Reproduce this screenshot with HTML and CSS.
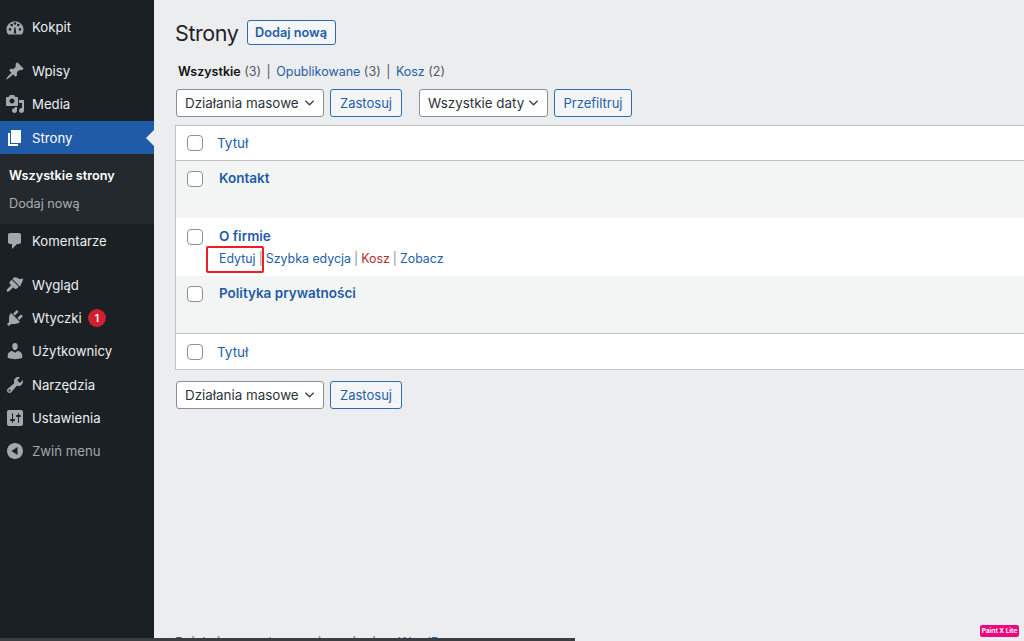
FILE: index.html
```html
<!DOCTYPE html>
<html lang="pl">
<head>
  <meta charset="UTF-8">
  <title>Strony</title>
  <link rel="stylesheet" href="styles.css">
</head>
<body>
  <div class="layout">
    <aside class="sidebar">
      <ul class="menu">
        <li class="menu-item">
          <svg class="icon" viewBox="0 0 20 20"><path fill-rule="evenodd" d="M3.300 17.500h13.400c1.200-1.400 1.800-3.100 1.800-5 0-4.600-3.800-8.300-8.500-8.300S1.500 7.900 1.500 12.500c0 1.900.6 3.600 1.800 5zM5 13.700a1.300 1.300 0 1 1 0-2.600 1.300 1.300 0 0 1 0 2.600zm1.700-4.300a1.300 1.300 0 1 1 0-2.600 1.300 1.300 0 0 1 0 2.600zM10 7.800a1.300 1.300 0 1 1 0-2.600 1.300 1.300 0 0 1 0 2.600zm1.200 8.700H8.800l.5-5 .7-2 .7 2zm2.100-7.100a1.300 1.300 0 1 1 0-2.600 1.300 1.300 0 0 1 0 2.600zm1.700 4.300a1.300 1.300 0 1 1 0-2.600 1.300 1.300 0 0 1 0 2.600z"/></svg>
          <span>Kokpit</span>
        </li>
        <li class="menu-gap"></li>
        <li class="menu-item">
          <svg class="icon" viewBox="0 0 20 20"><path d="M10.440 3.020l1.820-1.820 6.360 6.350-1.830 1.820c-1.050-.68-2.480-.57-3.410.36l-.75.75c-.92.930-1.040 2.350-.35 3.410l-1.830 1.820-2.410-2.410-2.800 2.790c-.42.420-3.380 2.710-3.800 2.290s1.860-3.390 2.280-3.810l2.790-2.790L4.100 9.360l1.830-1.820c1.050.69 2.480.57 3.400-.36l.75-.75c.93-.92 1.050-2.350.36-3.410z"/></svg>
          <span>Wpisy</span>
        </li>
        <li class="menu-item">
          <svg class="icon" viewBox="0 0 20 20"><path fill-rule="evenodd" d="M13 11V4c0-.55-.45-1-1-1h-1.670L9 1H5L3.670 3H2c-.55 0-1 .45-1 1v7c0 .55.45 1 1 1h10c.55 0 1-.45 1-1zM7 4.500c1.380 0 2.500 1.120 2.500 2.500S8.380 9.500 7 9.500 4.500 8.380 4.500 7 5.620 4.500 7 4.500zM14 6h5v10.500c0 1.380-1.120 2.500-2.500 2.500S14 17.880 14 16.500s1.120-2.500 2.500-2.500c.17 0 .34.020.5.050V9h-3V6zm-4 8.050V13h2v3.500c0 1.380-1.120 2.500-2.500 2.500S7 17.880 7 16.500 8.120 14 9.500 14c.17 0 .34.020.5.050z"/></svg>
          <span>Media</span>
        </li>
        <li class="menu-item menu-item-current">
          <svg class="icon" viewBox="0 0 20 20"><path d="M6 15V2h10v13H6zm-1 1h8v2H3V5h2v11z"/></svg>
          <span>Strony</span>
        </li>
        <li class="submenu">
          <div class="submenu-link submenu-link-current">Wszystkie strony</div>
          <div class="submenu-link">Dodaj nową</div>
        </li>
        <li class="menu-item">
          <svg class="icon" viewBox="0 0 20 20"><path d="M5 2h9c1.100 0 2 .9 2 2v7c0 1.100-.9 2-2 2h-2l-5 5v-5H5c-1.100 0-2-.9-2-2V4c0-1.100.9-2 2-2z"/></svg>
          <span>Komentarze</span>
        </li>
        <li class="menu-gap"></li>
        <li class="menu-item">
          <svg class="icon" viewBox="0 0 20 20"><path d="M14.480 11.060L7.410 3.990l1.500-1.500c.5-.56 2.300-.47 3.510.32 1.210.8 1.430 1.280 2.660 1.280 1.180 0 2.270-.28 2.920-.75 0 0-.08 3.180-1.120 4.360-1.060 1.180-1.370 1.820-.9 3.360zM6.760 4.640l7.070 7.070-1.590 1.590c-.83.83-2.120.92-2.830.21l-1.220-1.220-3.760 3.770c-.32.31-1.600 1.150-2.400.35-.8-.8.040-2.080.35-2.400l3.770-3.760-1.220-1.220c-.71-.71-.62-2 .21-2.830z"/></svg>
          <span>Wygląd</span>
        </li>
        <li class="menu-item">
          <svg class="icon" viewBox="0 0 20 20"><path d="M13.110 4.360L9.870 7.600 8 5.730l3.240-3.240c.35-.34 1.050-.2 1.560.31.52.51.66 1.210.31 1.560zm-8 1.770l.91-1.120 9.010 9.010-1.190.84c-.71.71-2.630 1.160-3.820 1.160H6.140L4.900 17.260c-.59.59-1.540.59-2.120 0-.59-.58-.59-1.530 0-2.120l1.240-1.240v-3.880c0-1.130.52-3.090 1.090-3.890zm7.260 3.970l3.240-3.240c.34-.35 1.040-.21 1.550.31.52.51.66 1.210.31 1.550l-3.240 3.250z"/></svg>
          <span>Wtyczki</span>
          <span class="badge">1</span>
        </li>
        <li class="menu-item">
          <svg class="icon" viewBox="0 0 20 20"><path d="M10 9.250c-2.270 0-2.730-3.440-2.730-3.440C7 4.020 7.820 2 9.970 2c2.160 0 2.980 2.020 2.710 3.810 0 0-.41 3.440-2.680 3.440zm0 2.570L12.720 10c2.390 0 4.520 2.330 4.520 4.530v2.490s-3.650 1.130-7.240 1.130c-3.650 0-7.240-1.130-7.240-1.130v-2.490c0-2.250 1.940-4.480 4.470-4.480z"/></svg>
          <span>Użytkownicy</span>
        </li>
        <li class="menu-item">
          <svg class="icon" viewBox="0 0 20 20"><path fill-rule="evenodd" d="M16.680 9.770c-1.340 1.340-3.300 1.670-4.950.99l-5.410 6.520c-.99.99-2.590.99-3.570 0-.99-.98-.99-2.580 0-3.570l6.520-5.420c-.68-1.650-.35-3.610.99-4.950 1.280-1.280 3.120-1.620 4.720-1.060l-2.890 2.890 2.820 2.820 2.860-2.870c.53 1.580.18 3.380-1.090 4.650zM3.810 16.210c.4.390 1.030.39 1.420 0 .4-.4.4-1.030 0-1.430-.39-.39-1.020-.39-1.420 0-.39.4-.39 1.030 0 1.430z"/></svg>
          <span>Narzędzia</span>
        </li>
        <li class="menu-item">
          <svg class="icon" viewBox="0 0 20 20"><path fill-rule="evenodd" d="M18 16V4c0-1.100-.9-2-2-2H4c-1.100 0-2 .9-2 2v12c0 1.100.9 2 2 2h12c1.100 0 2-.9 2-2zM8 11h1c.55 0 1 .45 1 1s-.45 1-1 1H8v1.500c0 .28-.22.5-.5.5s-.5-.22-.5-.5V13H6c-.55 0-1-.45-1-1s.45-1 1-1h1V5.500c0-.28.22-.5.5-.5s.5.22.5.5V11zm5-2h-1c-.55 0-1-.45-1-1s.45-1 1-1h1V5.500c0-.28.22-.5.5-.5s.5.22.5.5V7h1c.55 0 1 .45 1 1s-.45 1-1 1h-1v5.500c0 .28-.22.5-.5.5s-.5-.22-.5-.5V9z"/></svg>
          <span>Ustawienia</span>
        </li>
        <li class="menu-item menu-item-collapse">
          <svg class="icon" viewBox="0 0 20 20"><path fill-rule="evenodd" d="M18 10c0-4.420-3.580-8-8-8s-8 3.580-8 8 3.580 8 8 8 8-3.580 8-8zm-5.500 4l-6-4 6-4v8z"/></svg>
          <span>Zwiń menu</span>
        </li>
      </ul>
    </aside>

    <main class="content">
      <div class="heading">
        <h1>Strony</h1>
        <a class="btn btn-add">Dodaj nową</a>
      </div>

      <ul class="filters">
        <li><strong>Wszystkie</strong> <span class="count">(3)</span></li>
        <li class="sep">|</li>
        <li><a>Opublikowane</a> <span class="count">(3)</span></li>
        <li class="sep">|</li>
        <li><a>Kosz</a> <span class="count">(2)</span></li>
      </ul>

      <div class="tablenav">
        <div class="select select-bulk">Działania masowe<svg viewBox="0 0 12 8"><path d="M1.500 1.500L6 6l4.500-4.500"/></svg></div>
        <a class="btn btn-apply">Zastosuj</a>
        <div class="select select-dates">Wszystkie daty<svg viewBox="0 0 12 8"><path d="M1.500 1.500L6 6l4.500-4.500"/></svg></div>
        <a class="btn btn-filter">Przefiltruj</a>
      </div>

      <div class="pages">
        <div class="row row-head">
          <span class="check"></span>
          <a class="col-title">Tytuł</a>
        </div>
        <div class="row row-page row-alt">
          <span class="check"></span>
          <div class="page-cell"><a class="page-title">Kontakt</a></div>
        </div>
        <div class="row row-page">
          <span class="check"></span>
          <div class="page-cell">
            <a class="page-title">O firmie</a>
            <div class="row-actions">
              <a>Edytuj</a><span class="sep">|</span><a>Szybka edycja</a><span class="sep">|</span><a class="trash">Kosz</a><span class="sep">|</span><a>Zobacz</a>
            </div>
          </div>
        </div>
        <div class="row row-page row-alt">
          <span class="check"></span>
          <div class="page-cell"><a class="page-title">Polityka prywatności</a></div>
        </div>
        <div class="row row-foot">
          <span class="check"></span>
          <a class="col-title">Tytuł</a>
        </div>
      </div>

      <div class="tablenav tablenav-bottom">
        <div class="select select-bulk">Działania masowe<svg viewBox="0 0 12 8"><path d="M1.500 1.500L6 6l4.500-4.500"/></svg></div>
        <a class="btn btn-apply">Zastosuj</a>
      </div>

      <p class="footer-note">Dziękujemy za tworzenie z użyciem <a>WordPressa</a></p>
    </main>
  </div>

  <div class="highlight"></div>
  <div class="scrollbar"></div>
  <div class="paint-badge">Paint X Lite</div>
</body>
</html>
```

FILE: styles.css
```css
* {
  box-sizing: border-box;
}

html, body {
  margin: 0;
  height: 641px;
  overflow: hidden;
}

body {
  font-family: Inter, "Liberation Sans", sans-serif;
  font-size: 13px;
  color: #2c3338;
  background-color: #ecedef;
}

a {
  color: #2460a7;
  text-decoration: none;
}

.layout {
  display: flex;
  height: 641px;
}

/* sidebar */
.sidebar {
  width: 154px;
  flex-shrink: 0;
  background-color: #1b2024;
}

.menu {
  list-style: none;
  margin: 0;
  padding: 10.5px 0 0;
  font-size: 13.200px;
}

.menu-gap {
  height: 11px;
}

.menu-item {
  display: flex;
  align-items: center;
  height: 33.200px;
  padding-left: 5px;
  color: #eceff1;
  position: relative;
}

.icon {
  width: 20px;
  height: 20px;
  margin-right: 7px;
  flex-shrink: 0;
  fill: #a3a8ad;
}

.menu-item-current {
  background-color: #1f5ba6;
  color: #fff;
}

.menu-item-current .icon {
  fill: #fff;
}

.menu-item-current::after {
  content: "";
  position: absolute;
  right: 0;
  top: 50%;
  margin-top: -8px;
  border: 8px solid transparent;
  border-right-color: #ecedef;
  border-left-width: 0;
}

.menu-item-collapse {
  color: #a3a8ad;
}

.submenu {
  height: 70px;
  padding-top: 8px;
  background-color: #24292e;
}

.submenu-link {
  height: 28px;
  line-height: 28px;
  padding-left: 9px;
  font-size: 12.700px;
  color: #a9aeb3;
}

.submenu-link-current {
  color: #fff;
  font-weight: 600;
}

.badge {
  width: 18px;
  height: 18px;
  margin-left: 6px;
  border-radius: 50%;
  background-color: #cf1f30;
  color: #fff;
  font-size: 10px;
  font-weight: 600;
  line-height: 18px;
  text-align: center;
}

/* content */
.content {
  flex: 1;
  min-width: 0;
  padding: 20px 0 0 21px;
  position: relative;
}

.heading {
  display: flex;
  align-items: center;
  height: 25px;
  gap: 8px;
}

.heading h1 {
  margin: 0;
  font-size: 21.500px;
  font-weight: 400;
  letter-spacing: -0.4px;
  color: #1f2327;
}

.btn {
  display: flex;
  align-items: center;
  justify-content: center;
  border: 1px solid #2f6bb0;
  border-radius: 3px;
  background-color: #f4f5f7;
}

.btn-add {
  width: 89px;
  height: 25px;
  font-size: 12.700px;
  font-weight: 600;
}

.filters {
  list-style: none;
  display: flex;
  gap: 5.500px;
  margin: 19px 0 0;
  padding: 0 0 0 3px;
  height: 16px;
  line-height: 16px;
  font-size: 12.500px;
}

.filters strong {
  font-weight: 600;
  color: #111;
}

.count,
.filters .sep {
  color: #50575e;
}

.tablenav {
  display: flex;
  margin-top: 9px;
  padding-left: 1px;
  height: 28px;
}

.tablenav-bottom {
  margin-top: 11px;
}

.select {
  display: flex;
  align-items: center;
  justify-content: space-between;
  height: 28px;
  padding: 0 8px;
  background-color: #fff;
  border: 1px solid #8c8f94;
  border-radius: 3px;
  font-size: 13.400px;
  color: #2c3338;
}

.select svg {
  width: 11px;
  height: 8px;
  fill: none;
  stroke: #3c434a;
  stroke-width: 1.500;
}

.select-bulk {
  width: 148px;
}

.select-dates {
  width: 129px;
  margin-left: 17px;
}

.btn-apply,
.btn-filter {
  height: 28px;
  margin-left: 6px;
}

.btn-apply {
  width: 72px;
}

.btn-filter {
  width: 78px;
}

.pages {
  margin-top: 8px;
  background-color: #fff;
  border: 1px solid #c3c4c7;
  border-right: none;
  height: 245px;
}

.row {
  display: flex;
  align-items: flex-start;
  padding-left: 11px;
}

.check {
  width: 16px;
  height: 16px;
  flex-shrink: 0;
  background-color: #fff;
  border: 1px solid #8c8f94;
  border-radius: 4px;
}

.row-head,
.row-foot {
  align-items: center;
}

.row-head {
  height: 34.500px;
  border-bottom: 1px solid #c3c4c7;
}

.row-foot {
  height: 36px;
  border-top: 1px solid #c3c4c7;
}

.col-title {
  margin-left: 14px;
  font-size: 13.500px;
}

.row-page {
  height: 57.500px;
  padding-top: 10.500px;
}

.row-alt {
  background-color: #f3f4f4;
}

.page-cell {
  margin-left: 16px;
  margin-top: -1px;
}

.page-title {
  display: block;
  font-size: 13.500px;
  font-weight: 600;
  line-height: 16px;
  color: #1f5ba6;
}

.row-actions {
  display: flex;
  margin-top: 7px;
  font-size: 12.400px;
  line-height: 16px;
}

.row-actions .sep {
  margin: 0 3px;
  color: #8c8f94;
}

.row-actions .trash {
  color: #b32d2e;
}

.footer-note {
  position: absolute;
  left: 21px;
  top: 634px;
  margin: 0;
  color: #50575e;
}

/* things drawn over the screenshot */
.highlight {
  position: absolute;
  left: 206px;
  top: 246px;
  width: 58px;
  height: 27px;
  border: 2px solid #ee1c25;
  border-radius: 2px;
}

.scrollbar {
  position: absolute;
  left: 0;
  bottom: 0;
  width: 575px;
  height: 3px;
  background-color: #3c3f42;
}

.paint-badge {
  position: absolute;
  left: 980px;
  top: 625px;
  width: 39px;
  height: 12px;
  border-radius: 2px;
  background-color: #f0047f;
  color: #fff;
  font-size: 6.500px;
  font-weight: 700;
  line-height: 12px;
  text-align: center;
  white-space: nowrap;
}
```
